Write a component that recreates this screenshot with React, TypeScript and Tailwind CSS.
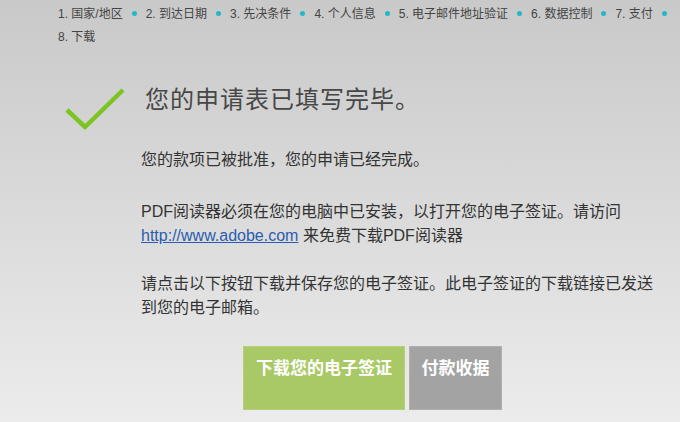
const steps = [
  "1. 国家/地区",
  "2. 到达日期",
  "3. 先决条件",
  "4. 个人信息",
  "5. 电子邮件地址验证",
  "6. 数据控制",
  "7. 支付",
  "8. 下载",
];

const font = "font-['Liberation_Sans','Noto_Sans_CJK_SC',sans-serif]";

export default function App() {
  return (
    <div
      className={`w-[680px] h-[422px] overflow-hidden bg-gradient-to-b from-[#c9c9c9] to-[#ececec] text-[#333] ${font}`}
    >
      {/* step bar */}
      <div className="pt-[3px] pl-[58px] w-[678px] text-[12px] leading-[23px] text-[#444]">
        {steps.map((s, i) => (
          <span key={s} className="whitespace-nowrap">
            {s}
            {i < steps.length - 1 && (
              <span className="inline-block w-[5px] h-[5px] rounded-full bg-[#22b8c4] mx-[9px] align-middle mb-[3px]" />
            )}
          </span>
        ))}
      </div>

      {/* header */}
      <div className="mt-[26px] flex items-start">
        <svg width="64" height="60" viewBox="0 0 64 60" className="ml-[62px] shrink-0">
          <path
            d="M5 35 L23 52 L61 15"
            fill="none"
            stroke="#7cc41f"
            strokeWidth="4.5"
          />
        </svg>
        <h1 className="ml-[19px] mt-[7px] text-[24px] leading-[36px] text-[#474747] font-normal tracking-[1px]">
          您的申请表已填写完毕。
        </h1>
      </div>

      {/* body */}
      <div className="pl-[141px] w-[666px] text-[16px] leading-[24px] text-[#333]">
        <p className="mt-[13px]">您的款项已被批准，您的申请已经完成。</p>
        <p className="mt-[28px]">
          PDF阅读器必须在您的电脑中已安装，以打开您的电子签证。请访问{" "}
          <a href="#" className="text-[#2a5db0] underline">
            http://www.adobe.com
          </a>{" "}
          来免费下载PDF阅读器
        </p>
        <p className="mt-[24px]">
          请点击以下按钮下载并保存您的电子签证。此电子签证的下载链接已发送到您的电子邮箱。
        </p>
      </div>

      {/* buttons */}
      <div className="mt-[26px] ml-[243px] flex gap-[4px]">
        <button className="w-[162px] h-[64px] bg-[#a9c966] text-white text-[17px] font-semibold leading-[20px] pt-[12px] flex justify-center items-start border border-[#b5d078]">
          下载您的电子签证
        </button>
        <button className="w-[93px] h-[64px] bg-[#a3a3a3] text-white text-[17px] font-semibold leading-[20px] pt-[12px] flex justify-center items-start border border-[#b0b0b0]">
          付款收据
        </button>
      </div>
    </div>
  );
}
